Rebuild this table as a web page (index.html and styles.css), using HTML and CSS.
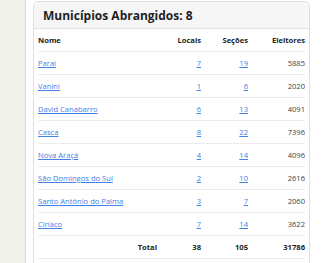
FILE: index.html
```html
<!DOCTYPE html>
<html lang="pt">
<head>
<meta charset="utf-8">
<link rel="stylesheet" href="styles.css">
</head>
<body>
<div class="layout">
  <aside class="side"></aside>
  <main class="content">
    <section class="card">
      <header class="card-header">
        <h2 class="card-title">Municípios Abrangidos: 8</h2>
      </header>
      <div class="card-body">
        <table class="tbl">
          <thead>
            <tr><th class="l">Nome</th><th class="c-loc">Locais</th><th class="c-sec">Seções</th><th class="c-ele">Eleitores</th></tr>
          </thead>
          <tbody>
            <tr><td class="l"><a href="#">Paraí</a></td><td><a href="#">7</a></td><td><a href="#">19</a></td><td>5885</td></tr>
            <tr><td class="l"><a href="#">Vanini</a></td><td><a href="#">1</a></td><td><a href="#">6</a></td><td>2020</td></tr>
            <tr><td class="l"><a href="#">David Canabarro</a></td><td><a href="#">6</a></td><td><a href="#">13</a></td><td>4091</td></tr>
            <tr><td class="l"><a href="#">Casca</a></td><td><a href="#">8</a></td><td><a href="#">22</a></td><td>7396</td></tr>
            <tr><td class="l"><a href="#">Nova Araçá</a></td><td><a href="#">4</a></td><td><a href="#">14</a></td><td>4096</td></tr>
            <tr><td class="l"><a href="#">São Domingos do Sul</a></td><td><a href="#">2</a></td><td><a href="#">10</a></td><td>2616</td></tr>
            <tr><td class="l"><a href="#">Santo Antônio do Palma</a></td><td><a href="#">3</a></td><td><a href="#">7</a></td><td>2060</td></tr>
            <tr><td class="l"><a href="#">Ciríaco</a></td><td><a href="#">7</a></td><td><a href="#">14</a></td><td>3622</td></tr>
          </tbody>
          <tfoot>
            <tr><th>Total</th><th>38</th><th>105</th><th>31786</th></tr>
          </tfoot>
        </table>
      </div>
    </section>
  </main>
</div>
</body>
</html>
```
FILE: styles.css
```css
html, body {
  margin: 0;
  padding: 0;
  background: #ffffff;
  font-family: "Open Sans", "Noto Sans", sans-serif;
  color: #212529;
}
.layout {
  display: flex;
  height: 263px;
  overflow: hidden;
}
.side {
  width: 25px;
  flex: none;
  background: #f1f1ec;
  border-right: 1px solid #dcdcd4;
}
.content {
  flex: 1;
  padding: 1px 15px 0 7px;
}
.card {
  border: 1px solid #dedede;
  border-radius: 5px;
  background: #fff;
  overflow: hidden;
}
.card-header {
  background: #f6f6f6;
  border-bottom: 1px solid #e2e2e2;
  height: 26px;
  display: flex;
  align-items: center;
  padding: 0 9px;
}
.card-title {
  margin: 0;
  font-size: 12px;
  font-weight: 700;
  color: #1f1f1f;
}
.card-body {
  padding: 0 4px 20px;
}
.tbl {
  width: 100%;
  border-collapse: collapse;
  font-size: 7.6px;
}
.tbl th, .tbl td {
  height: 22px;
  padding: 0;
  border-bottom: 1px solid #ececec;
  text-align: right;
  vertical-align: middle;
}
.tbl th {
  font-weight: 700;
  color: #212529;
}
.tbl td {
  color: #444;
}
.tbl .l {
  text-align: left;
}
.tbl a {
  color: #4282e6;
  text-decoration: underline;
}
.tbl .c-loc { width: 44px; }
.tbl .c-sec { width: 47px; }
.tbl .c-ele { width: 57px; }
```
